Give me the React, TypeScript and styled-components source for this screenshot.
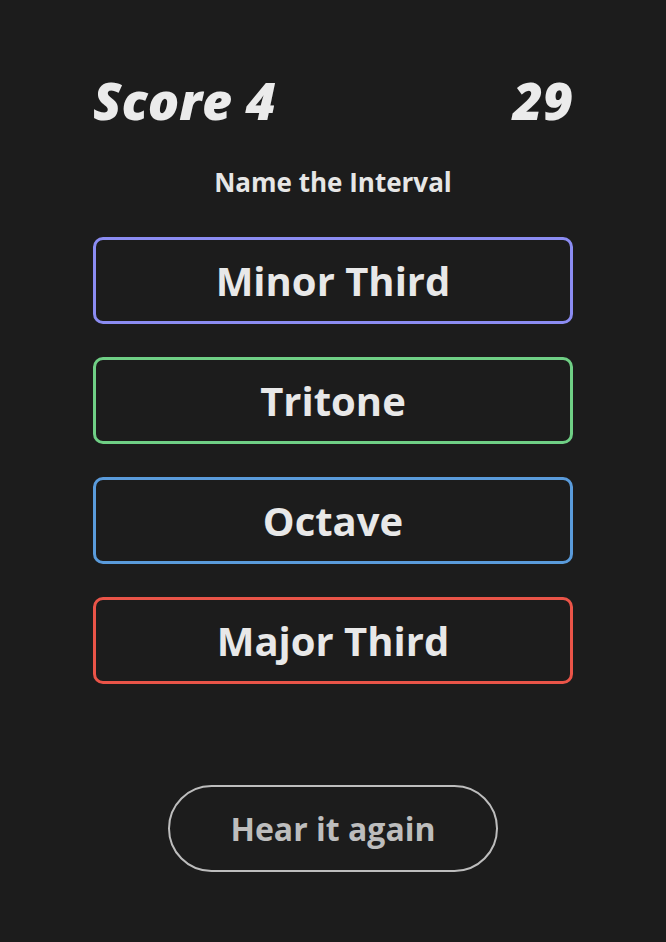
import styled, { createGlobalStyle } from 'styled-components';

const GlobalStyle = createGlobalStyle`
  html, body {
    margin: 0;
    padding: 0;
    background: #1c1c1c;
  }
  body {
    font-family: "Open Sans", "Liberation Sans", sans-serif;
    color: #e8e8e8;
  }
`

const Page = styled.div`
  width: 666px;
  min-height: 942px;
  display: flex;
  justify-content: center;
`

const Column = styled.div`
  width: 480px;
  padding-top: 69px;
  display: flex;
  flex-direction: column;
  align-items: stretch;
`

const ScoreRow = styled.div`
  display: flex;
  justify-content: space-between;
  align-items: baseline;
  font-size: 52px;
  font-weight: 800;
  font-style: italic;
  line-height: 62px;
  color: #ebebeb;
`

const Prompt = styled.div`
  margin-top: 33px;
  text-align: center;
  font-size: 26px;
  font-weight: 700;
  line-height: 36px;
  color: #e6e6e6;
`

const Choices = styled.div`
  margin-top: 37px;
  display: flex;
  flex-direction: column;
  gap: 33px;
`

const Choice = styled.button<{ $color: string }>`
  height: 87px;
  border: 3px solid ${p => p.$color};
  border-radius: 10px;
  background: transparent;
  color: #e8e8e8;
  font-family: inherit;
  font-size: 40px;
  font-weight: 700;
  cursor: pointer;
`

const Footer = styled.div`
  margin-top: 101px;
  display: flex;
  justify-content: center;
`

const ReplayButton = styled.button`
  width: 330px;
  height: 87px;
  border: 2px solid #bdbdbd;
  border-radius: 44px;
  background: transparent;
  color: #bdbdbd;
  font-family: inherit;
  font-size: 32px;
  font-weight: 700;
  cursor: pointer;
`

const choices = [
  { label: 'Minor Third', color: '#8b8cf2' },
  { label: 'Tritone', color: '#6fcf85' },
  { label: 'Octave', color: '#5a9bdb' },
  { label: 'Major Third', color: '#ea5448' },
]

export default function App() {
  return (
    <Page>
      <GlobalStyle />
      <Column>
        <ScoreRow>
          <span>Score 4</span>
          <span>29</span>
        </ScoreRow>
        <Prompt>Name the Interval</Prompt>
        <Choices>
          {choices.map(c => (
            <Choice key={c.label} $color={c.color}>{c.label}</Choice>
          ))}
        </Choices>
        <Footer>
          <ReplayButton>Hear it again</ReplayButton>
        </Footer>
      </Column>
    </Page>
  )
}
